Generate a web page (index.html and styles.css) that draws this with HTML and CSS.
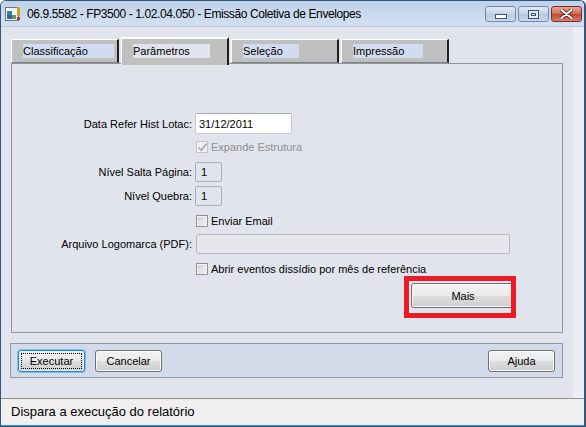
FILE: index.html
```html
<!DOCTYPE html>
<html lang="pt-BR">
<head>
    <meta charset="UTF-8">
    <title>Emissão Coletiva de Envelopes</title>
    <link rel="stylesheet" href="styles.css">
</head>
<body>

    <div class="window">
        <div class="titlebar">
            <svg class="app-icon" width="16" height="16" viewBox="0 0 16 16">
                <rect x="0.5" y="1.5" width="13" height="13" fill="#f4f6f8" stroke="#6b7480"/>
                <rect x="2" y="5" width="5" height="4" fill="#2d8a8a"/>
                <rect x="2" y="9" width="5" height="4" fill="#3b5fa8"/>
                <rect x="7" y="9" width="4" height="4" fill="#5a9a5a"/>
                <rect x="12" y="1" width="3" height="9" fill="#d0a020"/>
                <rect x="12" y="11" width="3" height="3" fill="#c03020"/>
            </svg>
            <span class="title">06.9.5582 - FP3500 - 1.02.04.050 - Emissão Coletiva de Envelopes</span>
            <div class="controls">
                <button class="ctl"><span class="glyph-min"></span></button>
                <button class="ctl"><span class="glyph-max"></span></button>
                <button class="ctl close">
                    <svg width="13" height="10" viewBox="0 0 13 10">
                        <path d="M1.5 1 L11.5 9 M11.5 1 L1.5 9" stroke="#4a1a14" stroke-width="3.6" stroke-linecap="round"/>
                        <path d="M1.5 1 L11.5 9 M11.5 1 L1.5 9" stroke="#ffffff" stroke-width="2.2" stroke-linecap="round"/>
                    </svg>
                </button>
            </div>
        </div>

        <div class="client">
            <div class="main">
                <div class="tabs">
                    <div class="tab"><span class="tab-label w1">Classificação</span></div>
                    <div class="tab active"><span class="tab-label w2">Parâmetros</span></div>
                    <div class="tab"><span class="tab-label w3">Seleção</span></div>
                    <div class="tab"><span class="tab-label w4">Impressão</span></div>
                </div>

                <div class="panel">
                    <div class="form">
                        <label class="lbl r1">Data Refer Hist Lotac:</label>
                        <div class="field r1"><input class="text date" type="text" value="31/12/2011"></div>

                        <div class="field r2"><span class="check disabled checked"></span><span class="check-text muted">Expande Estrutura</span></div>

                        <label class="lbl r3">Nível Salta Página:</label>
                        <div class="field r3"><span class="small-box">1</span></div>

                        <label class="lbl r4">Nível Quebra:</label>
                        <div class="field r4"><span class="small-box">1</span></div>

                        <div class="field r5"><span class="check"></span><span class="check-text">Enviar Email</span></div>

                        <label class="lbl r6">Arquivo Logomarca (PDF):</label>
                        <div class="field r6"><span class="text wide"></span></div>

                        <div class="field r7"><span class="check"></span><span class="check-text">Abrir eventos dissídio por mês de referência</span></div>

                        <div class="field r8">
                            <div class="mark">
                                <button class="btn mais">Mais</button>
                            </div>
                        </div>
                    </div>
                </div>

                <div class="actions">
                    <button class="btn default"><span class="focus">Executar</span></button>
                    <button class="btn">Cancelar</button>
                    <button class="btn help">Ajuda</button>
                </div>
            </div>
            <div class="edge"></div>
        </div>

        <div class="statusbar">Dispara a execução do relatório</div>
    </div>

</body>
</html>
```

FILE: styles.css
```css
/* General */
* {
    box-sizing: border-box;
}

body {
    margin: 0;
    font-family: 'Liberation Sans', Arial, sans-serif;
    font-size: 11px;
    color: #000;
    background: #fff;
}

/* Window frame */
.window {
    width: 586px;
    height: 427px;
    display: flex;
    flex-direction: column;
    border: 1px solid #34557c;
    border-right-width: 2px;
    border-radius: 6px 6px 0 0;
    background: #e1e4ec;
    overflow: hidden;
}

/* Title bar */
.titlebar {
    height: 26px;
    flex: none;
    display: flex;
    align-items: center;
    padding-left: 4px;
    background: linear-gradient(#c0d3ea, #d2dff0);
    border-bottom: 1px solid #b9c8da;
}

.app-icon {
    flex: none;
    margin-top: 1px;
}

.title {
    margin-left: 6px;
    margin-top: 1px;
    font-size: 12px;
    letter-spacing: -0.4px;
    color: #000;
    white-space: nowrap;
}

.controls {
    margin-left: auto;
    margin-right: 2px;
    margin-top: 1px;
    display: flex;
    gap: 2px;
}

.ctl {
    width: 31px;
    height: 16px;
    padding: 0;
    border: 1px solid #7089ac;
    border-radius: 3px;
    background: linear-gradient(#dfe9f5, #c4d5ea 50%, #b6c9e2 51%, #c8d8ec);
    display: flex;
    align-items: center;
    justify-content: center;
}

.ctl.close {
    width: 31px;
    border-color: #7a2c24;
    background: linear-gradient(#e8a493, #d26a55 50%, #c2432c 51%, #d7836c);
}

.glyph-min {
    width: 12px;
    height: 5px;
    margin-top: 5px;
    background: #fff;
    border: 1px solid #3e5170;
}

.glyph-max {
    width: 11px;
    height: 9px;
    border: 1px solid #3e5170;
    background: #e6edf6;
    box-shadow: inset 0 0 0 2px #e6edf6, inset 0 0 0 3px #3e5170;
}

/* Client area */
.client {
    flex: 1;
    display: flex;
}

.main {
    flex: 1;
    padding-left: 9px;
    display: flex;
    flex-direction: column;
}

.edge {
    width: 11px;
    background: #eceef2;
}

/* Tabs */
.tabs {
    height: 36px;
    padding-top: 10px;
    padding-left: 1px;
    display: flex;
    align-items: flex-end;
    gap: 2px;
    position: relative;
    z-index: 1;
}

.tab {
    width: 108px;
    height: 24px;
    padding: 4px 0 0 11px;
    background: #c0c0c0;
    border-top: 1px solid #fff;
    border-left: 1px solid #fff;
    border-right: 2px solid #202020;
    border-bottom: 1px solid #808080;
}

.tab.active {
    height: 28px;
    margin-bottom: -2px;
    padding-top: 5px;
    border-top: 2px solid #fff;
    border-bottom: none;
}

.tab-label {
    display: inline-block;
    height: 14px;
    line-height: 14px;
    background: #d3dcee;
}

.tab.active .tab-label {
    background: #e1e4ec;
}

.w1 { width: 91px; }
.w2 { width: 77px; }
.w3 { width: 56px; }
.w4 { width: 70px; }

/* Parameters panel */
.panel {
    height: 270px;
    margin-left: 1px;
    width: 552px;
    border: 1px solid #8e96a4;
    padding-top: 49px;
}

.form {
    display: grid;
    grid-template-columns: 180px 1fr;
    grid-template-rows: 21px 26px 23px 26px 24px 22px 28px 40px;
    column-gap: 3px;
}

.lbl {
    grid-column: 1;
    justify-self: end;
    align-self: center;
    white-space: nowrap;
}

.field {
    grid-column: 2;
    display: flex;
    align-items: center;
}

.r1 { grid-row: 1; }
.r2 { grid-row: 2; }
.r3 { grid-row: 3; }
.r4 { grid-row: 4; }
.r5 { grid-row: 5; }
.r6 { grid-row: 6; }
.r7 { grid-row: 7; }
.r8 { grid-row: 8; align-items: flex-start; }

.text {
    height: 21px;
    border: 1px solid #c6cbd3;
    border-top-color: #a9afb8;
    border-radius: 2px;
    font: inherit;
    padding: 0 3px;
    background: #fff;
}

.date {
    width: 97px;
}

.wide {
    display: block;
    width: 314px;
    height: 20px;
    margin-left: 1px;
    background: #e5e7ec;
    border-color: #b7bcc4;
}

.small-box {
    width: 27px;
    height: 20px;
    line-height: 19px;
    padding-left: 5px;
    border: 1px solid #a8aeb8;
    border-radius: 2px;
    background: #e1e4ec;
}

/* Checkboxes */
.check {
    width: 12px;
    height: 12px;
    margin-left: 1px;
    border: 1px solid #8f9092;
    background: linear-gradient(135deg, #cfd1d5, #f2f3f5);
    box-shadow: inset 0 0 0 1px #f4f4f4;
    position: relative;
}

.check.disabled {
    border-color: #c2c4c8;
    background: #f0f1f3;
}

.check.checked::after {
    content: "";
    position: absolute;
    left: 3px;
    top: 0;
    width: 3px;
    height: 7px;
    border-right: 2px solid #b2b4b8;
    border-bottom: 2px solid #b2b4b8;
    transform: rotate(40deg);
}

.check-text {
    margin-left: 3px;
}

.muted {
    color: #8d8f93;
}

/* Buttons */
.btn {
    height: 22px;
    padding: 0;
    font: inherit;
    color: #000;
    border: 1px solid #707070;
    border-radius: 3px;
    background: linear-gradient(#f2f2f2, #ebebeb 50%, #dddddd 51%, #cfcfcf);
    box-shadow: inset 0 0 0 1px #fbfbfb;
}

.mark {
    margin-top: -7px;
    margin-left: 209px;
    width: 112px;
    height: 42px;
    border: 5px solid #ed1c24;
    padding: 2px 0 0 2px;
    overflow: hidden;
}

.mais {
    width: 104px;
    height: 25px;
    border-color: #6f6f6f;
}

/* Bottom action bar */
.actions {
    margin-top: 10px;
    width: 553px;
    height: 35px;
    display: flex;
    align-items: center;
    padding: 1px 7px 0 7px;
    gap: 10px;
    border: 1px solid #8e96a4;
    background: #d3dbea;
}

.actions .btn {
    width: 67px;
}

.btn.default {
    border-color: #3c7fb1;
    box-shadow: 0 0 0 1px #6ec6f1, inset 0 0 0 1px #dff1fb;
    padding: 2px;
}

.focus {
    display: block;
    height: 100%;
    line-height: 14px;
    border: 1px dotted #000;
}

.btn.help {
    margin-left: auto;
}

/* Status bar */
.statusbar {
    height: 28px;
    flex: none;
    padding: 5px 0 0 10px;
    font-size: 13px;
    background: #f0eeee;
    border-top: 1px solid #8f8f8f;
    border-bottom: 1px solid #2f8fcf;
}
```
